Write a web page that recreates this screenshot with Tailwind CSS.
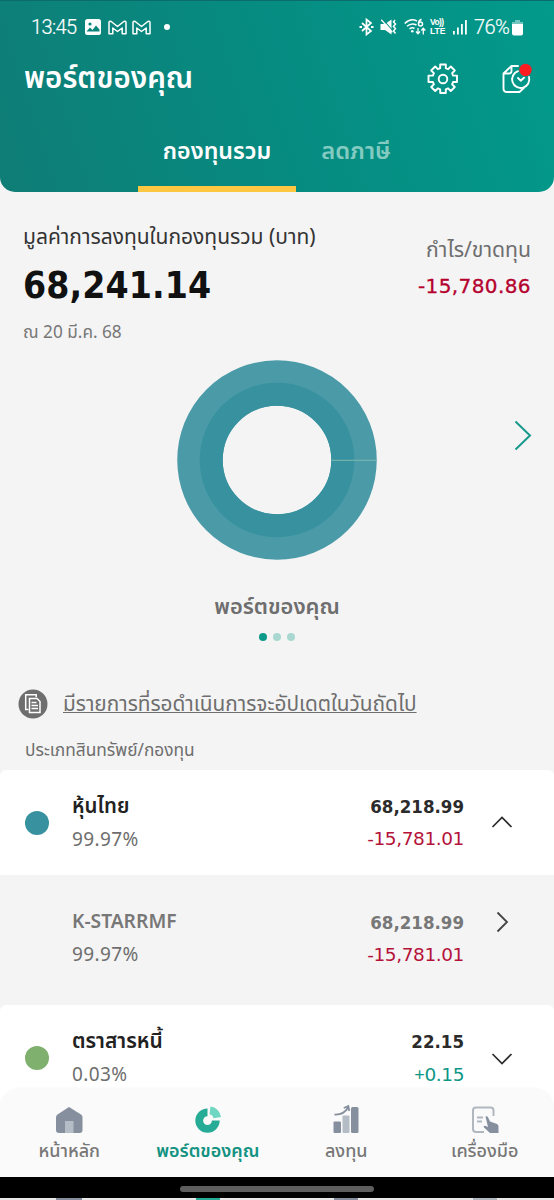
<!DOCTYPE html>
<html lang="th">
<head>
<meta charset="utf-8">
<title>พอร์ตของคุณ</title>
<script src="https://cdn.jsdelivr.net/npm/@tailwindcss/browser@4"></script>
</head>
<body class="w-[554px] h-[1200px] overflow-hidden bg-[#f4f4f4] font-['Noto_Sans_Thai','Noto_Sans','DejaVu_Sans',sans-serif] text-[#6e6e6e]">
<div class="flex flex-col h-[1200px] whitespace-nowrap">

  <header class="h-[192px] shrink-0 flex flex-col rounded-b-[15px] overflow-hidden border-t border-[#0c6c6c] bg-linear-[72deg] from-[#0f7d76] via-[#078a80] via-45% to-[#029a8b] text-white">
    <!-- status bar -->
    <div class="h-[52px] flex items-center justify-between pl-[31px] pr-[31px] font-[Roboto]">
      <div class="flex items-center">
        <span class="w-[46px] text-[20px] font-light tracking-[-0.6px] [-webkit-text-stroke:0.2px_#fff]">13:45</span>
        <svg class="ml-2" width="16" height="16" viewBox="0 0 16 16"><rect width="16" height="16" rx="2.5" fill="#fff"/><circle cx="5" cy="5" r="1.6" fill="#09857b"/><path d="M1.5 12.5l3.5-4 2.5 2.500 3.500-4.500 3.500 4v2z" fill="#09857b"/></svg>
        <svg class="ml-[7px]" width="19" height="15" viewBox="0 0 19 15" fill="none" stroke="#fff" stroke-width="1.500" stroke-linejoin="round"><path d="M1 2.800Q1 .5 3.200 1.500L9.500 6.500 15.800 1.500Q18 .5 18 2.800V13.800H14.200V8L9.500 11.500 4.800 8V13.800H1z"/></svg>
        <svg class="ml-[5px]" width="19" height="15" viewBox="0 0 19 15" fill="none" stroke="#fff" stroke-width="1.500" stroke-linejoin="round"><path d="M1 2.800Q1 .5 3.200 1.500L9.500 6.500 15.800 1.500Q18 .5 18 2.800V13.800H14.200V8L9.500 11.500 4.800 8V13.800H1z"/></svg>
        <span class="ml-[13px] size-[6px] rounded-full bg-white"></span>
      </div>
      <div class="flex items-center">
        <svg width="15" height="18" viewBox="0 0 15 18" fill="none" stroke="#fff" stroke-width="1.700"><path d="M3 5l9 8-4.500 3.500V1.500L12 5l-9 8"/><path d="M.5 9h2.500M12 9h2.500" stroke-width="2.200"/></svg>
        <svg class="ml-[6px]" width="17" height="16" viewBox="0 0 17 16"><path d="M.5 5H5L11.500.5v15L5 11H.5z" fill="#fff"/><path d="M2.500 0l10.500 12" stroke="#09897e" stroke-width="1.100"/><path d="M1.300.8l11 12.500" stroke="#fff" stroke-width="1.300"/><path d="M15 1l-1.500 2 2 2-2 2.500 2 2-2 2.500 2 2.500" fill="none" stroke="#fff" stroke-width="1.500"/></svg>
        <svg class="ml-[7px]" width="22" height="18" viewBox="0 0 22 18" fill="none" stroke="#fff" stroke-width="1.500"><path d="M.7 5.500Q6.500-.5 13 3M3 8.300Q7.500 4.300 12.500 7M5.500 11Q8 9 10.500 10.500"/><circle cx="8.300" cy="13.200" r="1.300" fill="#fff" stroke="none"/><path d="M17.500 1.200Q14.500 2.500 14.500 5.500"/><circle cx="16.500" cy="6" r="2"/><path d="M14 10v5.500M12 13.500l2 2.300 2-2.300M19.300 16.500V10.500M17.300 12.500l2-2.300 2 2.300" stroke-width="1.300"/></svg>
        <div class="ml-[4px] w-[17px] flex flex-col font-['Liberation_Sans'] text-[8.500px] leading-[9px] font-bold"><span class="tracking-[-0.6px]">Vo))</span><span>LTE</span></div>
        <svg class="ml-[6px]" width="14" height="16" viewBox="0 0 14 16" fill="#fff"><rect y="12" width="1.800" height="3.500"/><rect x="4" y="8.500" width="1.800" height="7"/><rect x="8" y="5" width="1.800" height="10.500"/><rect x="12" y="1" width="1.800" height="14.500"/></svg>
        <span class="ml-[7px] w-[36px] text-[20px] font-light tracking-[-0.6px] [-webkit-text-stroke:0.2px_#fff]">76%</span>
        <svg class="ml-[2px]" width="11" height="17" viewBox="0 0 11 17"><path d="M3 1h5v2h3v3H0V3h3z" fill="#fff" opacity=".45"/><path d="M0 5h11v9.500q0 2-2 2H2q-2 0-2-2z" fill="#fff"/></svg>
      </div>
    </div>
    <!-- title -->
    <div class="h-[52px] flex items-center justify-between pl-[24px] pr-[22px]">
      <h1 class="text-[29.5px] leading-[40px] font-semibold">พอร์ตของคุณ</h1>
      <div class="flex items-center gap-[43px]">
        <svg width="32" height="32" viewBox="0 0 32 32" fill="none" stroke="#fff" stroke-width="1.900" stroke-linejoin="round"><path d="M13.200 1.500h5.600v3.700l2.300 1 2.700-2.700 4 4-2.700 2.700 1 2.400h3.900v6.400h-3.900l-1 2.300 2.700 2.700-4 4-2.700-2.700-2.300 1v3.700h-5.600v-3.700l-2.300-1-2.700 2.700-4-4 2.700-2.700-1-2.300H1.500v-6.400h4.400l1-2.400-2.700-2.700 4-4 2.700 2.700 2.300-1z"/><circle cx="16" cy="16" r="4.300"/></svg>
        <svg width="30" height="32" viewBox="0 0 30 32" fill="none" stroke="#fff" stroke-width="1.900" stroke-linecap="round" stroke-linejoin="round"><path d="M16 3H9.500L1.500 10.500v15q0 3.500 3.500 3.500h12.500l4.500-4.200M9.500 3.500V8q0 2.500-2.500 2.500H2"/><path d="M16 8.200a8.600 8.600 0 1 0 11 5.800"/><path d="M16 15l2.700 2.700 3.300-3"/><circle cx="23.500" cy="7" r="6.200" fill="#fb1d20" stroke="none"/></svg>
      </div>
    </div>
    <!-- tabs -->
    <nav class="h-[87px] flex pl-[138px] text-[23.2px] font-semibold">
      <div class="w-[158px] flex flex-col items-center justify-end"><span class="h-[50px] leading-[32px]">กองทุนรวม</span><i class="w-full h-[6px] bg-[#fdc741]"></i></div>
      <div class="w-[120px] flex flex-col items-center justify-end text-[#83cbc1]"><span class="h-[56px] leading-[32px] text-[23.8px]">ลดภาษี</span></div>
    </nav>
  </header>

  <!-- portfolio value -->
  <section class="h-[158px] shrink-0 flex justify-between pl-[23px] pr-[23px]">
    <div class="flex flex-col pt-[29px]">
      <span class="h-[32px] leading-[33px] text-[21px] text-[#333]">มูลค่าการลงทุนในกองทุนรวม (บาท)</span>
      <b class="h-[65px] leading-[65px] text-[37px] font-['DejaVu_Sans_Condensed','DejaVu_Sans'] font-bold tracking-[0.1px] text-[#111]">68,241.14</b>
      <span class="h-[30px] leading-[30px] text-[17.2px] text-[#777]">ณ 20 มี.ค. 68</span>
    </div>
    <div class="flex flex-col items-end pt-[43px]">
      <span class="h-[32px] leading-[33px] text-[21.2px]">กำไร/ขาดทุน</span>
      <span class="h-[40px] leading-[38px] text-[20px] tracking-[0.4px] [-webkit-text-stroke:0.3px_#b5002d] font-['DejaVu_Sans'] text-[#b5002d]">-15,780.86</span>
    </div>
  </section>

  <!-- allocation chart -->
  <section class="h-[320px] shrink-0 flex flex-col">
    <div class="h-[241px] flex items-start justify-between pl-[177px] pr-[22px] pt-[10px]">
      <svg width="200" height="200" viewBox="0 0 200 200"><circle cx="100" cy="100" r="77" fill="none" stroke="#4a9aa8" stroke-width="45.500"/><circle cx="100" cy="100" r="65.800" fill="none" stroke="#37919f" stroke-width="23"/><path d="M154.500 100.300H199.500" stroke="#7fb9ae" stroke-width="1"/></svg>
      <svg class="mt-[58px]" width="18" height="34" viewBox="0 0 18 34" fill="none" stroke="#18998c" stroke-width="2"><path d="M1.500 3.500l14.500 14-14.500 14"/></svg>
    </div>
    <h2 class="h-[32px] leading-[33px] text-center text-[21.9px] font-semibold">พอร์ตของคุณ</h2>
    <div class="mt-[9.500px] flex justify-center gap-[6px]"><i class="size-[8px] rounded-full bg-[#0b998a]"></i><i class="size-[8px] rounded-full bg-[#a9d8d1]"></i><i class="size-[8px] rounded-full bg-[#a9d8d1]"></i></div>
  </section>

  <section class="h-[100px] shrink-0 flex flex-col pt-[19px]">
    <div class="h-[30px] flex items-center pl-[18px]">
      <svg width="30" height="30" viewBox="0 0 30 30"><circle cx="15" cy="15" r="14.500" fill="#6e6e6e"/><g fill="none" stroke="#fff" stroke-width="1.500"><path d="M10.500 20.500H7.700V5.700h10.500v2.500"/><path d="M11.500 9.500H19l3 3v11H11.500z"/><path d="M13.500 13.500h5M13.500 16.500h6.500M13.500 19.500h6.500"/></g></svg>
      <a class="ml-[15px] mt-[2px] leading-[30px] text-[20.8px] underline decoration-1 underline-offset-[1px] [text-decoration-skip-ink:none]">มีรายการที่รอดำเนินการจะอัปเดตในวันถัดไป</a>
    </div>
    <span class="mt-[17px] pl-[25px] leading-[31px] text-[17.3px]">ประเภทสินทรัพย์/กองทุน</span>
  </section>

  <!-- holdings -->
  <section class="h-[105px] shrink-0 flex items-center rounded-t-[6px] bg-white pl-[25px] pr-[41px]">
    <i class="size-[24px] rounded-full bg-[#37919f]"></i>
    <div class="ml-[23px] flex flex-col"><b class="leading-[32px] text-[20.4px] font-semibold text-[#222]">หุ้นไทย</b><span class="leading-[32px] text-[19px] tracking-[0.4px] font-['Noto_Sans']">99.97%</span></div>
    <div class="ml-auto flex flex-col items-end"><b class="leading-[32px] text-[18.500px] font-['DejaVu_Sans_Condensed','DejaVu_Sans'] text-[#2b2b2b]">68,218.99</b><span class="leading-[32px] text-[18.500px] tracking-[-0.4px] font-['DejaVu_Sans'] text-[#b5123a]">-15,781.01</span></div>
    <svg class="ml-[27px] -mt-[2px]" width="22" height="12" viewBox="0 0 22 12" fill="none" stroke="#2b2b2b" stroke-width="1.700"><path d="M1.500 11L11 1.500 20.500 11"/></svg>
  </section>
  <section class="h-[130px] shrink-0 flex items-start pt-[32px] pl-[72px] pr-[41px]">
    <div class="flex flex-col"><b class="leading-[32px] text-[19.2px] font-semibold text-[#777]">K-STARRMF</b><span class="leading-[31px] text-[19px] tracking-[0.4px] font-['Noto_Sans']">99.97%</span></div>
    <div class="ml-auto flex flex-col items-end"><b class="leading-[32px] text-[18.500px] font-['DejaVu_Sans_Condensed','DejaVu_Sans'] text-[#777]">68,218.99</b><span class="leading-[32px] text-[18.500px] tracking-[-0.4px] font-['DejaVu_Sans'] text-[#b5123a]">-15,781.01</span></div>
    <svg class="ml-[32px] mr-[4px] mt-[4px]" width="13" height="22" viewBox="0 0 13 22" fill="none" stroke="#444" stroke-width="1.800"><path d="M1.500 1.500L11 11 1.500 20.500"/></svg>
  </section>
  <section class="h-[84px] shrink-0 flex items-start pt-[21px] rounded-t-[6px] bg-white pl-[25px] pr-[41px]">
    <i class="mt-[20px] size-[24px] rounded-full bg-[#7fb06d]"></i>
    <div class="ml-[23px] flex flex-col"><b class="leading-[32px] text-[20.9px] font-semibold text-[#222]">ตราสารหนี้</b><span class="leading-[33px] text-[19px] tracking-[0.4px] font-['Noto_Sans']">0.03%</span></div>
    <div class="ml-auto flex flex-col items-end"><b class="leading-[32px] text-[18.500px] font-['DejaVu_Sans_Condensed','DejaVu_Sans'] text-[#2b2b2b]">22.15</b><span class="leading-[31px] text-[18.500px] tracking-[-0.4px] font-['DejaVu_Sans'] text-[#0e9686]"><span class="font-['Noto_Sans']">+</span>0.15</span></div>
    <svg class="ml-[27px] mt-[27px]" width="22" height="12" viewBox="0 0 22 12" fill="none" stroke="#2b2b2b" stroke-width="1.700"><path d="M1.500 1L11 10.500 20.500 1"/></svg>
  </section>

  <!-- bottom navigation -->
  <div class="h-[88px] shrink-0 bg-white">
  <nav class="h-[88px] grid grid-cols-4 rounded-t-[22px] bg-[#fafafa] shadow-[0_0_4px_rgba(0,0,0,0.06)] text-[18px] font-medium text-[#777] [&>div]:flex [&>div]:flex-col [&>div]:items-center [&>div]:pt-[15px] [&_span]:mt-[2px]">
    <div><svg width="30" height="30" viewBox="0 0 30 30"><path d="M15 3L27 10.500q1.500 1 1.500 2.500V26q0 3-3 3H5q-3 0-3-3V13q0-1.500 1.500-2.500z" fill="#858f9e"/><path d="M11 17h8.500v12H11z" fill="#b4bcc5"/></svg><span class="leading-[32px]">หน้าหลัก</span></div>
    <div class="text-[#129281] font-semibold"><svg width="30" height="30" viewBox="0 0 30 30"><path d="M14.500 8.300a8.300 8.300 0 1 0 8.300 8.300" fill="none" stroke="#26ab96" stroke-width="7.800"/><path d="M17.500 2.500A12 12 0 0 1 28 13l-7.500 1.200a5 5 0 0 0-4-4z" fill="#6fd6c1"/></svg><span class="leading-[32px]">พอร์ตของคุณ</span></div>
    <div><svg width="30" height="30" viewBox="0 0 30 30"><rect x="2.500" y="17.500" width="7.500" height="11.500" rx="1" fill="#858f9e"/><rect x="11.500" y="11.500" width="7" height="17.500" rx="1" fill="#b4bcc5"/><rect x="20" y="3" width="7.500" height="26" rx="1.500" fill="#858f9e"/><path d="M3.500 10.500Q13 11 17 3.500M12.800 4l4.500-2 1 5" fill="none" stroke="#858f9e" stroke-width="1.800"/></svg><span class="leading-[32px]">ลงทุน</span></div>
    <div><svg width="30" height="30" viewBox="0 0 30 30"><path d="M14 28H6q-3 0-3-3V6.500q0-3 3-3h14.500q3 0 3 3V12" fill="none" stroke="#b0b7bf" stroke-width="2"/><path d="M7 13.500h6M7 17.500h5" stroke="#b0b7bf" stroke-width="1.800"/><path d="M15.500 12.500q1.500-1 2.500.8l2 4.200 7 2.500q1.500.7 1.500 2.500V29H20l-6.500-6q.5-2 3-.8l1.500.8z" fill="#858f9e"/></svg><span class="leading-[32px]">เครื่องมือ</span></div>
  </nav>
  </div>
  <div class="h-[21px] shrink-0 bg-black flex justify-center pt-[9px]"><i class="w-[194px] h-[6px] rounded-full bg-[#5e5e5e]"></i></div>
  <div class="h-[2px] shrink-0 grid grid-cols-4 bg-[#e9e9e9] justify-items-center"><i class="w-[26px] h-full bg-[#858f9e]"></i><i class="w-[24px] h-full bg-[#26ab96]"></i><i class="w-[24px] h-full bg-[#858f9e]"></i><i class="w-[24px] h-full bg-[#b0b7bf]"></i></div>
</div>
</body>
</html>
